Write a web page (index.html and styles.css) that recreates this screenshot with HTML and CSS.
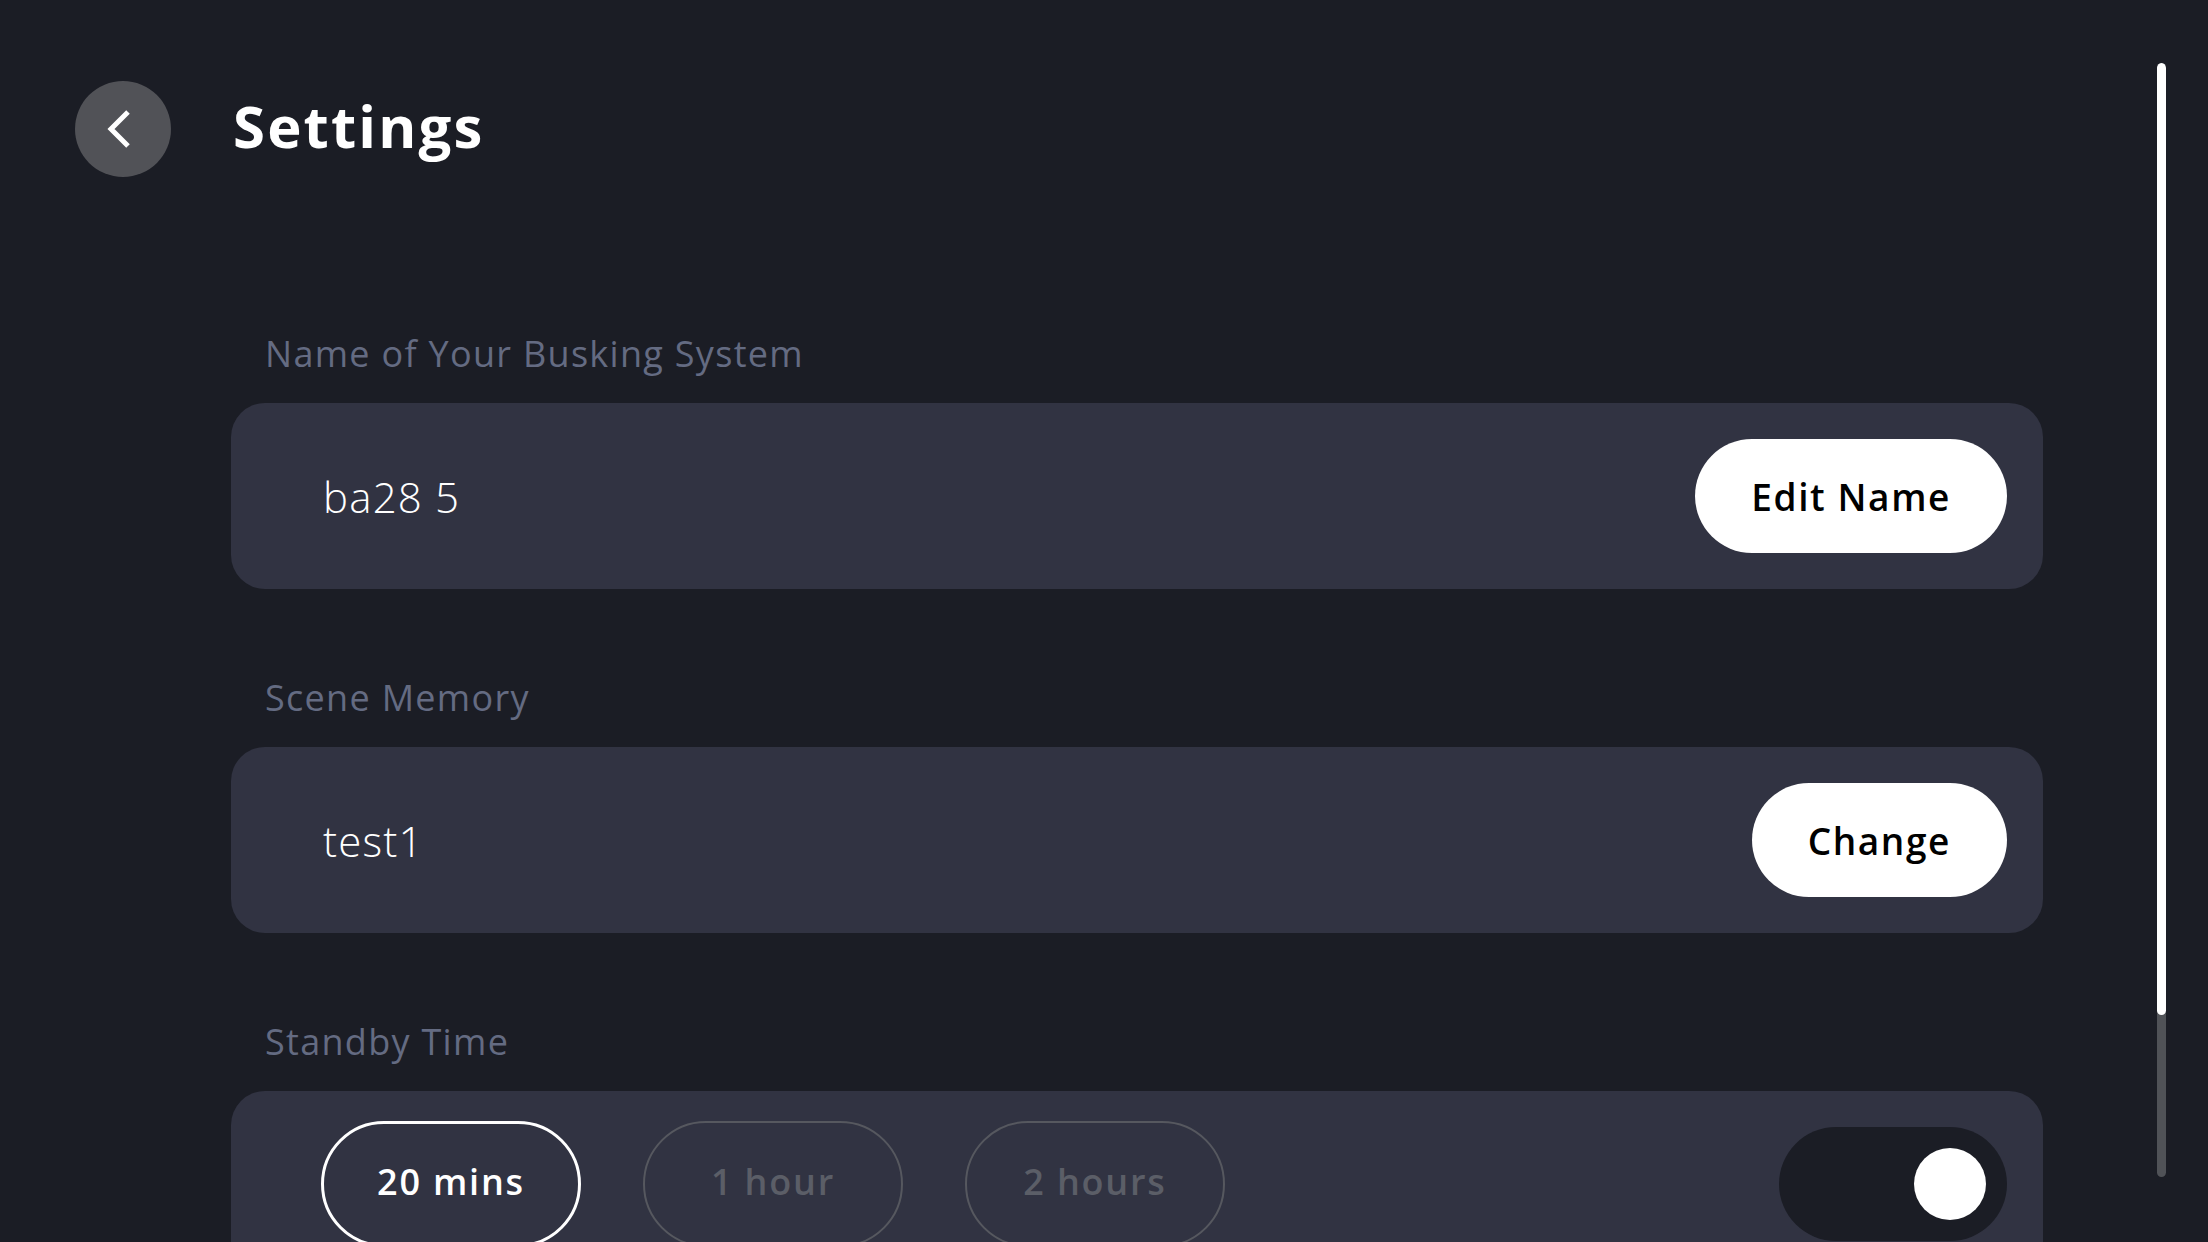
FILE: index.html
```html
<!DOCTYPE html>
<html lang="en">
<head>
<meta charset="utf-8">
<title>Settings</title>
<link rel="stylesheet" href="styles.css">
</head>
<body>
<div class="page">
  <main class="main">
    <header class="header">
      <button class="back" aria-label="Back">
        <svg width="40" height="40" viewBox="0 0 40 40"><path d="M29 3 L12 20 L29 37" fill="none" stroke="#fff" stroke-width="5" stroke-linecap="butt" stroke-linejoin="miter"/></svg>
      </button>
      <h1 class="title">Settings</h1>
    </header>
    <section class="sections">
      <div class="group">
        <div class="label">Name of Your Busking System</div>
        <div class="card">
          <span class="value">ba28 5</span>
          <button class="btn">Edit Name</button>
        </div>
      </div>
      <div class="group">
        <div class="label">Scene Memory</div>
        <div class="card">
          <span class="value">test1</span>
          <button class="btn">Change</button>
        </div>
      </div>
      <div class="group">
        <div class="label">Standby Time</div>
        <div class="card card-standby">
          <div class="pills">
            <button class="pill pill-active">20 mins</button>
            <button class="pill">1 hour</button>
            <button class="pill">2 hours</button>
          </div>
          <div class="toggle"><span class="knob"></span></div>
        </div>
      </div>
    </section>
  </main>
  <aside class="scrollbar"><div class="thumb"></div></aside>
</div>
</body>
</html>
```
FILE: styles.css
```css
* { box-sizing: border-box; }
html, body { margin: 0; padding: 0; }
body {
  background: #1b1d25;
  font-family: "Open Sans", "Liberation Sans", sans-serif;
  color: #fff;
  width: 2208px;
  height: 1242px;
  overflow: hidden;
}
.page {
  display: flex;
  height: 1242px;
}
.main {
  flex: 1;
  padding: 81px 0 0 75px;
}
.header {
  display: flex;
  align-items: center;
  gap: 62px;
  height: 96px;
}
.back {
  width: 96px;
  height: 96px;
  border-radius: 50%;
  border: none;
  background: #515257;
  display: flex;
  align-items: center;
  justify-content: center;
  padding: 0 8px 0 0;
}
.title {
  margin: -6px 0 0 0;
  font-size: 58px;
  font-weight: 700;
  line-height: 80px;
  letter-spacing: 2.2px;
}
.sections {
  margin: 152px 0 0 156px;
  width: 1812px;
  display: flex;
  flex-direction: column;
  gap: 84px;
}
.label {
  font-size: 36px;
  line-height: 50px;
  color: #646b82;
  padding-left: 34px;
  margin-bottom: 24px;
  letter-spacing: 1.3px;
}
.card {
  background: #313342;
  border-radius: 34px;
  padding: 36px 36px 36px 92px;
  display: flex;
  align-items: center;
  justify-content: space-between;
}
.value {
  font-size: 42px;
  font-weight: 300;
  letter-spacing: 1.2px;
}
.btn {
  height: 114px;
  border: none;
  border-radius: 57px;
  background: #fff;
  color: #000;
  font-family: inherit;
  font-size: 37px;
  font-weight: 600;
  letter-spacing: 1.6px;
  padding: 0 56px;
}
.card-standby {
  padding: 30px 36px 30px 90px;
}
.pills {
  display: flex;
  gap: 62px;
}
.pill {
  width: 260px;
  height: 126px;
  border-radius: 63px;
  background: transparent;
  border: 2px solid #56585f;
  color: #5b5e67;
  font-family: inherit;
  font-size: 36px;
  font-weight: 600;
  letter-spacing: 1.8px;
  padding: 0 0 6px 0;
}
.pill-active {
  border: 3px solid #fff;
  color: #fff;
}
.toggle {
  width: 228px;
  height: 114px;
  border-radius: 57px;
  background: #1b1d25;
  display: flex;
  align-items: center;
  justify-content: flex-end;
  padding-right: 21px;
}
.knob {
  width: 72px;
  height: 72px;
  border-radius: 50%;
  background: #fff;
}
.scrollbar {
  width: 9px;
  margin: 63px 42px 0 0;
  height: 1114px;
  border-radius: 5px;
  background: #505257;
  overflow: hidden;
}
.thumb {
  height: 952px;
  background: #fff;
  border-radius: 5px;
}
```
